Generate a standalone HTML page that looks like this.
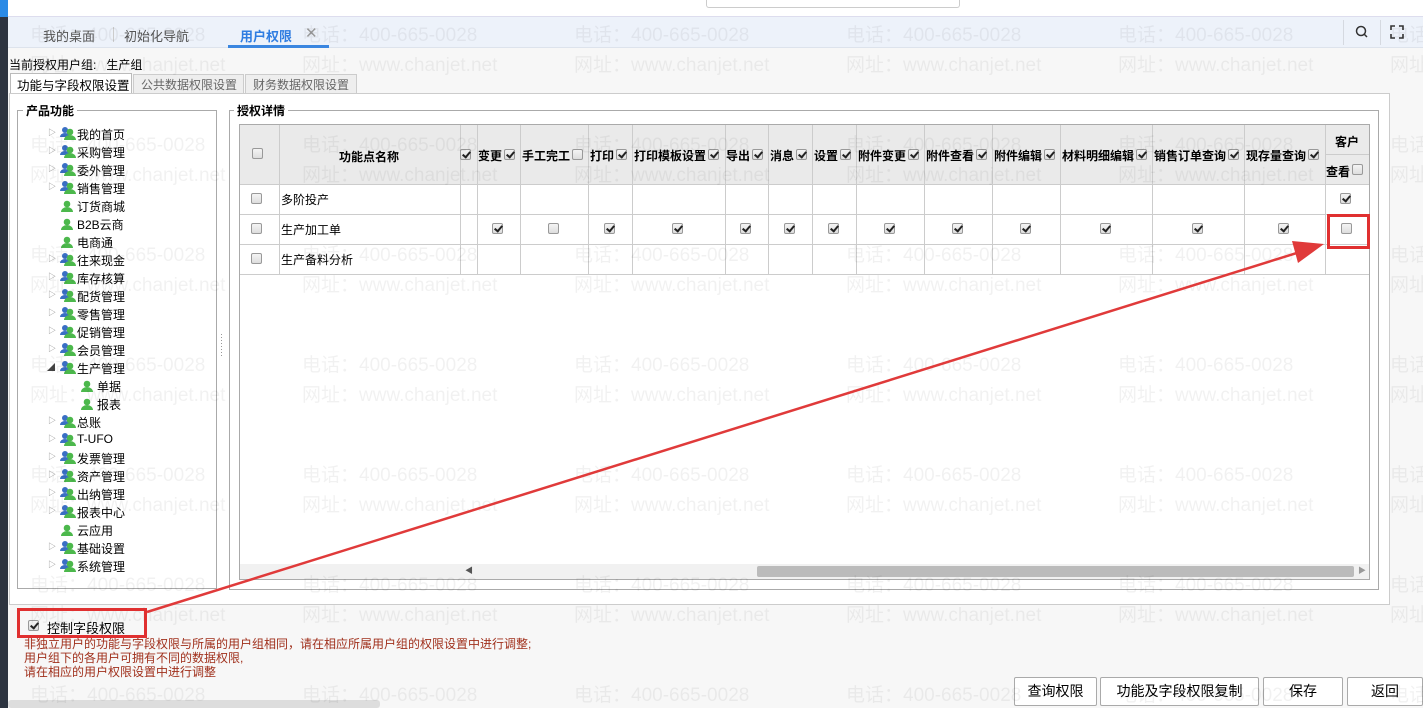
<!DOCTYPE html>
<html><head><meta charset="utf-8">
<style>
*{margin:0;padding:0;box-sizing:border-box}
html,body{width:1423px;height:708px;overflow:hidden}
body{background:#f7f7f7;font-family:"Liberation Sans","Noto Sans CJK SC",sans-serif;font-size:12px;color:#000;position:relative}
.a{position:absolute}
#wm{position:absolute;left:0;top:0;width:1423px;height:708px;overflow:hidden;z-index:50;pointer-events:none}
.wm{position:absolute;color:rgba(0,0,0,0.055);font-size:19px;white-space:nowrap}
.cb{position:absolute;width:11px;height:11px;border:1px solid #999;border-radius:2px;background:linear-gradient(#f4f4f4,#ddd)}
.cb.c::after{content:"";position:absolute;left:3px;top:0px;width:3px;height:6px;border:solid #222;border-width:0 2px 2px 0;transform:rotate(40deg)}
.vl{position:absolute;width:1px;background:#ccc}
.hl{position:absolute;height:1px;background:#ccc}
.ti{position:absolute;font-size:12px;white-space:nowrap}
.btn{position:absolute;top:677px;height:29px;border:1px solid #aaa;border-radius:2px;background:#fff;font-size:14px;text-align:center;line-height:27px}
</style></head><body>
<div class="a" style="left:0;top:0;width:1423px;height:17px;background:#fff;border-bottom:1px solid #dde"></div>
<div class="a" style="left:0;top:0;width:8px;height:17px;background:#2a8ae6"></div>
<div class="a" style="left:706px;top:0;width:254px;height:8px;border:1px solid #ccc;border-top:none;border-radius:0 0 3px 3px"></div>
<div class="a" style="left:0;top:17px;width:1423px;height:31px;background:#edf2fa;border-bottom:1px solid #dde3ec"></div>
<div class="a" style="left:0;top:17px;width:8px;height:691px;background:#2d3440"></div>
<div class="ti" style="left:43px;top:26px;font-size:13px;color:#555">我的桌面</div>
<div class="a" style="left:113px;top:27px;width:1px;height:15px;background:#ccc"></div>
<div class="ti" style="left:124px;top:26px;font-size:13px;color:#555">初始化导航</div>
<div class="ti" style="left:240px;top:26px;font-size:13px;color:#2f7de1;font-weight:bold">用户权限</div>
<div class="ti" style="left:305px;top:24px;font-size:15px;color:#999">✕</div>
<div class="a" style="left:228px;top:45px;width:101px;height:3px;background:#3a86e0"></div>
<div class="a" style="left:1343px;top:20px;width:1px;height:25px;background:#d5d9e0"></div>
<svg class="a" style="left:1354px;top:24px" width="16" height="16"><circle cx="7" cy="7" r="4.5" fill="none" stroke="#333" stroke-width="1.5"/><line x1="10" y1="10" x2="13" y2="13" stroke="#333" stroke-width="1.5"/></svg>
<div class="a" style="left:1380px;top:20px;width:1px;height:25px;background:#d5d9e0"></div>
<svg class="a" style="left:1390px;top:25px" width="14" height="14" fill="none" stroke="#333" stroke-width="1.6"><path d="M1 5V1h4M9 1h4v4M13 9v4H9M5 13H1V9"/></svg>
<div class="ti" style="left:9px;top:56px">当前授权用户组:&nbsp;&nbsp;&nbsp;生产组</div>
<div class="a" style="left:10px;top:73px;width:122px;height:21px;background:#fff;border:1px solid #bbb;border-bottom:none"></div>
<div class="ti" style="left:17px;top:75px;font-size:12.5px">功能与字段权限设置</div>
<div class="a" style="left:133px;top:74px;width:111px;height:20px;background:#eee;border:1px solid #ccc"></div>
<div class="ti" style="left:141px;top:76px;color:#666">公共数据权限设置</div>
<div class="a" style="left:245px;top:74px;width:112px;height:20px;background:#eee;border:1px solid #ccc"></div>
<div class="ti" style="left:253px;top:76px;color:#666">财务数据权限设置</div>
<div class="a" style="left:9px;top:93px;width:1381px;height:512px;background:#fff;border:1px solid #ccc"></div>
<div class="a" style="left:17px;top:110px;width:200px;height:479px;border:1px solid #aaa"></div>
<div class="ti" style="left:23px;top:102px;background:#fff;padding:0 3px;font-weight:bold">产品功能</div>
<div class="ti" style="left:220px;top:333px;color:#888;font-size:9px;line-height:3px">·<br>·<br>·<br>·<br>·<br>·<br>·<br>·</div>
<div id="tree"></div>
<div class="a" style="left:229px;top:110px;width:1150px;height:480px;border:1px solid #aaa"></div>
<div class="ti" style="left:234px;top:102px;background:#fff;padding:0 3px;font-weight:bold">授权详情</div>
<div class="a" style="left:239px;top:124px;width:1131px;height:456px;border:1px solid #aaa;background:#fff"></div>
<div class="a" style="left:240px;top:125px;width:1129px;height:59px;background:#eaeaea"></div>
<div id="tbl"></div>
<div class="a" style="left:240px;top:564px;width:1129px;height:15px;background:#f1f1f1"></div>
<div class="a" style="left:757px;top:566px;width:597px;height:11px;background:#bbb;border-radius:2px"></div>
<div class="ti" style="left:465px;top:565px;font-size:8px;color:#555">◀</div>
<div class="ti" style="left:1358px;top:565px;font-size:8px;color:#999">▶</div>
<div class="cb c" style="left:28px;top:620px"></div>
<div class="ti" style="left:47px;top:618px;font-size:13px">控制字段权限</div>
<div class="ti" style="left:24px;top:637px;color:#a0301c;line-height:14px">非独立用户的功能与字段权限与所属的用户组相同，请在相应所属用户组的权限设置中进行调整;<br>用户组下的各用户可拥有不同的数据权限,<br>请在相应的用户权限设置中进行调整</div>
<div class="a" style="left:8px;top:700px;width:372px;height:8px;background:#ddd;border-radius:3px"></div>
<div class="btn" style="left:1014px;width:83px">查询权限</div>
<div class="btn" style="left:1100px;width:159px">功能及字段权限复制</div>
<div class="btn" style="left:1263px;width:80px">保存</div>
<div class="btn" style="left:1347px;width:76px">返回</div>
<div class="a" style="left:17px;top:608px;width:130px;height:30px;border:3px solid #e03030;z-index:60"></div>
<div class="a" style="left:1327px;top:214px;width:43px;height:35px;border:3px solid #e03030;z-index:60"></div>
<svg class="a" style="left:0;top:0;z-index:60" width="1423" height="708"><line x1="147" y1="612" x2="1300" y2="252" stroke="#e03a3a" stroke-width="2.5"/><polygon points="1324,244 1292,241 1298,263" fill="#e03a3a"/></svg>
<div id="wm"></div>
<script>
var t=document.getElementById('tree'),h='';
var items=[['我的首页',1],['采购管理',1],['委外管理',1],['销售管理',1],['订货商城',0],['B2B云商',0],['电商通',0],['往来现金',1],['库存核算',1],['配货管理',1],['零售管理',1],['促销管理',1],['会员管理',1],['生产管理',2],['单据',3],['报表',3],['总账',1],['T-UFO',1],['发票管理',1],['资产管理',1],['出纳管理',1],['报表中心',1],['云应用',0],['基础设置',1],['系统管理',1]];
function icon(x,y,multi){var s='<svg class="a" style="left:'+x+'px;top:'+y+'px" width="17" height="15">';if(multi)s+='<circle cx="6" cy="4" r="3" fill="#3a6fc4"/><path d="M1 11a5 4 0 0 1 10 0z" fill="#3a6fc4"/>';s+='<circle cx="'+(multi?11:8)+'" cy="6" r="3.3" fill="#4cb84c"/><path d="M'+(multi?5:2)+' 14a6 5 0 0 1 12 0z" fill="#4cb84c"/></svg>';return s}
items.forEach(function(it,i){var y=125+i*18;var k=it[1];
if(k==1)h+='<div class="ti" style="left:48px;top:'+(y+2)+'px;font-size:8px;color:#888">▷</div>';
if(k==2)h+='<div class="ti" style="left:47px;top:'+(y+3)+'px;font-size:8px;color:#444">◢</div>';
var ix=k==3?79:59;h+=icon(ix,y+1,k==1||k==2);
h+='<div class="ti" style="left:'+(ix+18)+'px;top:'+(y+1)+'px">'+it[0]+'</div>';});
t.innerHTML=h;
var b=document.getElementById('tbl');h='';
var cols=[279,460,477,520,588,632,725,768,812,856,924,992,1060,1152,1244,1325];
cols.forEach(function(x){h+='<div class="vl" style="left:'+x+'px;top:125px;height:150px"></div>'});
[184,214,244,274].forEach(function(y){h+='<div class="hl" style="left:240px;top:'+y+'px;width:1129px"></div>'});
h+='<div class="hl" style="left:1325px;top:154px;width:44px"></div>';
h+='<div class="cb" style="left:252px;top:148px"></div>';
h+='<div class="ti" style="left:339px;top:148px;font-weight:bold">功能点名称</div>';
var hd=[[460,'',1],[478,'变更',1],[522,'手工完工',0],[590,'打印',1],[634,'打印模板设置',1],[726,'导出',1],[770,'消息',1],[814,'设置',1],[858,'附件变更',1],[926,'附件查看',1],[994,'附件编辑',1],[1062,'材料明细编辑',1],[1154,'销售订单查询',1],[1246,'现存量查询',1]];
hd.forEach(function(c){var w=c[1].length*12;if(c[1])h+='<div class="ti" style="left:'+c[0]+'px;top:147px;font-weight:bold">'+c[1]+'</div>';h+='<div class="cb'+(c[2]?' c':'')+'" style="left:'+(c[0]+w+(c[1]?2:0))+'px;top:149px"></div>'});
h+='<div class="ti" style="left:1335px;top:133px;font-weight:bold">客户</div><div class="ti" style="left:1326px;top:163px;font-weight:bold">查看</div><div class="cb" style="left:1352px;top:164px"></div>';
[199,229,259].forEach(function(y){h+='<div class="cb" style="left:251px;top:'+(y-6)+'px"></div>'});
h+='<div class="ti" style="left:281px;top:191px">多阶投产</div><div class="ti" style="left:281px;top:221px">生产加工单</div><div class="ti" style="left:281px;top:251px">生产备料分析</div>';
h+='<div class="cb c" style="left:1340px;top:193px"></div>';
[[498,1],[554,0],[610,1],[678,1],[746,1],[790,1],[834,1],[890,1],[958,1],[1026,1],[1106,1],[1198,1],[1284,1],[1347,0]].forEach(function(c){h+='<div class="cb'+(c[1]?' c':'')+'" style="left:'+(c[0]-6)+'px;top:223px"></div>'});
b.innerHTML=h;
var w=document.getElementById('wm');h='';
for(var r=0;r<7;r++){var y=20+r*110;for(var c=0;c<6;c++){var x=30+c*272;h+='<div class="wm" style="left:'+x+'px;top:'+y+'px">电话：400-665-0028</div><div class="wm" style="left:'+x+'px;top:'+(y+30)+'px">网址：www.chanjet.net</div>'}}
w.innerHTML=h;
</script>
</body></html>
